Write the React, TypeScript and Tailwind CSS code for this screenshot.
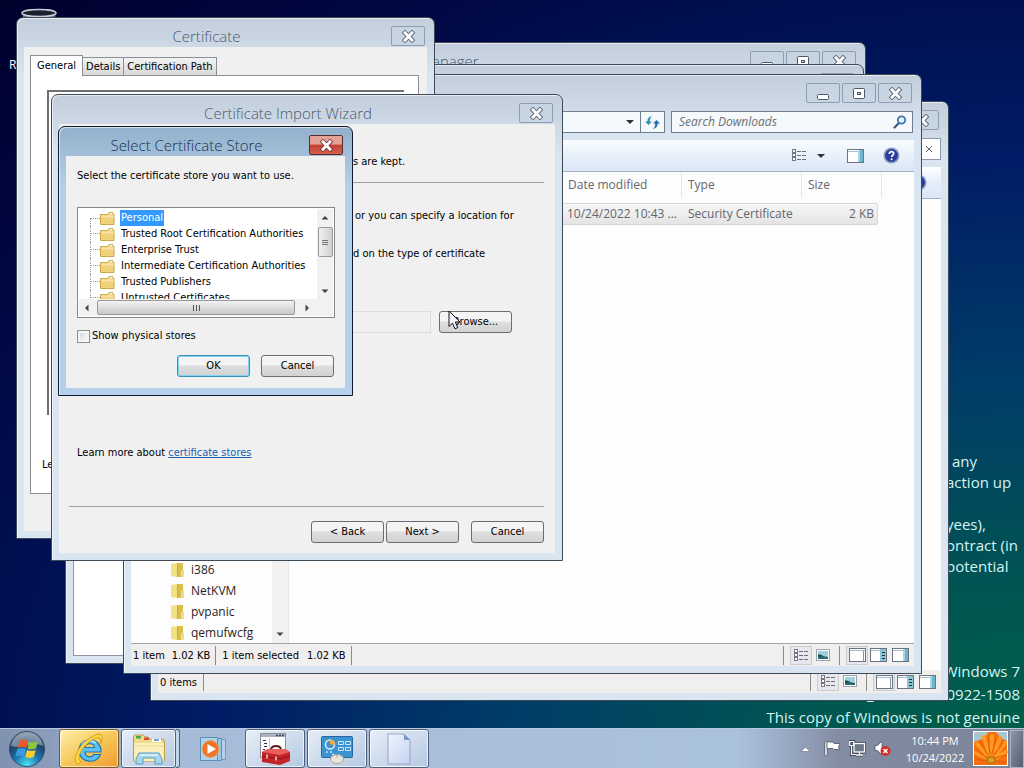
import type { ReactNode } from "react";

const TAHOMA = "font-['DejaVu_Sans_Condensed','DejaVu_Sans',sans-serif]";
const SEGOE = "font-['Open_Sans','Noto_Sans',sans-serif]";

/* ---------- caption glyphs ---------- */

function CloseGlyph({ stroke = "#5a6577" }: { stroke?: string }) {
  return (
    <svg width="15" height="13" viewBox="0 0 15 13" aria-hidden="true">
      <path d="M4 2.800l7 7.400M11 2.800l-7 7.400" stroke={stroke} strokeWidth="4.600" strokeLinecap="square" />
      <path d="M4 2.800l7 7.400M11 2.800l-7 7.400" stroke="#fff" strokeWidth="2.800" strokeLinecap="square" />
    </svg>
  );
}

function MinGlyph() {
  return (
    <svg width="14" height="13" viewBox="0 0 14 13" aria-hidden="true">
      <rect x="1.500" y="7.500" width="11" height="5" rx="1" fill="#fff" stroke="#4c5768" />
    </svg>
  );
}

function MaxGlyph() {
  return (
    <svg width="14" height="13" viewBox="0 0 14 13" aria-hidden="true">
      <rect x="1.500" y="1.500" width="11" height="10" rx="1" fill="#fff" stroke="#4c5768" />
      <rect x="5.500" y="5.500" width="3" height="2" fill="#c5d0dd" stroke="#4c5768" />
    </svg>
  );
}

function CaptionButton({ label, children, red }: { label: string; children: ReactNode; red?: boolean }) {
  return (
    <button
      type="button"
      aria-label={label}
      className={
        red
          ? "flex h-5 w-[34px] items-center justify-center rounded-[2px] border border-[#5b2a30] bg-linear-to-b from-[#e3a197] from-45% via-[#c2402f] via-50% to-[#d4604c]"
          : "flex h-5 w-[34px] items-center justify-center rounded-[2px] border border-[#8f9db3] bg-[#c6d3e1]/60"
      }
    >
      {children}
    </button>
  );
}

type WindowProps = {
  place: string;
  title?: string;
  left?: boolean;
  active?: boolean;
  sizable?: boolean;
  children?: ReactNode;
};

function Window({ place, title, left, active, sizable, children }: WindowProps) {
  const tone = active
    ? "border-[#0e1c2c] from-[#93b0cc] to-[#b4d0ea]"
    : "border-[#3f4a57] from-[#c2cedb] to-[#d9e5f1]";
  return (
    <section
      className={`absolute flex flex-col rounded-t-[7px] border bg-linear-to-b to-[60px] px-[7px] pb-[7px] shadow-[inset_1px_1px_0_rgba(255,255,255,0.6)] ${tone} ${place}`}
    >
      <header className="flex h-[29px] shrink-0 items-center gap-[3px] pr-[2px] pl-px">
        <h2
          className={`min-w-0 flex-1 truncate pt-[7px] text-[15px] leading-5 font-light ${SEGOE} ${
            left ? "text-left" : "text-center"
          } ${active ? "text-[#16304e]" : "text-[#4b596d]"}`}
        >
          {title}
        </h2>
        <div className="flex gap-[2px] pt-[7px]">
          {sizable && (
            <>
              <CaptionButton label="Minimize">
                <MinGlyph />
              </CaptionButton>
              <CaptionButton label="Maximize">
                <MaxGlyph />
              </CaptionButton>
            </>
          )}
          <CaptionButton label="Close" red={active}>
            <CloseGlyph stroke={active ? "#7b3a3a" : undefined} />
          </CaptionButton>
        </div>
      </header>
      {children}
    </section>
  );
}

function PushButton({ children, focused }: { children: ReactNode; focused?: boolean }) {
  return (
    <button
      type="button"
      className={`h-[22px] w-[73px] rounded-[3px] border bg-linear-to-b from-[#f4f4f4] from-45% via-[#dedede] via-50% to-[#d2d2d2] text-[11px] leading-4 ${
        focused ? "border-[#3a91b8] ring-1 ring-[#7fd4f2] ring-inset" : "border-[#6d6d6d]"
      }`}
    >
      {children}
    </button>
  );
}

/* ---------- small icons ---------- */

function SearchIcon() {
  return (
    <svg width="14" height="14" viewBox="0 0 14 14" aria-hidden="true">
      <path d="M1.500 12.500l4-4" stroke="#33567f" strokeWidth="2.200" strokeLinecap="round" />
      <circle cx="8.500" cy="5" r="3.700" fill="#e6f4ff" stroke="#3f76b4" strokeWidth="1.800" />
    </svg>
  );
}

function RefreshIcon() {
  return (
    <svg width="15" height="15" viewBox="0 0 15 15" aria-hidden="true">
      <path d="M0 6.500L3.500 10 7 6.500H4.800C4.800 4 5.500 2.500 7 1 4 1.500 2.300 3.500 2.300 6.500z" fill="#2d95b5" />
      <path d="M8 8.500L11.500 5 15 8.500h-2.300c0 3-1.700 5-4.700 5.500 1.500-1.500 2.200-3 2.200-5.500z" fill="#2c70b0" />
    </svg>
  );
}

function ListIcon() {
  return (
    <svg width="16" height="13" viewBox="0 0 16 13" aria-hidden="true">
      <g fill="#fff" stroke="#76777c">
        <rect x="1.500" y=".5" width="3" height="3" />
        <rect x="1.500" y="4.500" width="3" height="3" />
        <rect x="1.500" y="8.500" width="3" height="3" />
      </g>
      <path d="M6 2.500h4M11 2.500h4M6 6.500h4M11 6.500h4M6 10.500h4M11 10.500h4" stroke="#6b717c" />
    </svg>
  );
}

function PictureIcon() {
  return (
    <svg width="14" height="13" viewBox="0 0 14 13" aria-hidden="true">
      <rect x=".5" y=".5" width="13" height="11" fill="#fff" stroke="#9aa3ad" />
      <path d="M2 2h10v8H2z" fill="#9fd0e0" />
      <path d="M2 6c3-1 5 2 10 2v2H2z" fill="#2a6a6c" />
      <path d="M2 5.500l4 .5-1 1.500H2z" fill="#173f46" />
    </svg>
  );
}

function PaneIcon({ variant = "plain" }: { variant?: "plain" | "lines" | "side" }) {
  return (
    <svg width="17" height="14" viewBox="0 0 17 14" aria-hidden="true">
      <rect x=".5" y=".5" width="16" height="13" fill="#fff" stroke="#6b7480" />
      <path d="M1 2.500h15" stroke="#a9bccb" />
      {variant === "plain" && <path d="M14.500 3v10.500" stroke="#8497a8" />}
      {variant === "side" && (
        <>
          <path d="M11 1h5v12h-5z" fill="#6fb4cd" />
          <path d="M11 1h2v12h-2z" fill="#a6d6e4" />
        </>
      )}
      {variant === "lines" && (
        <>
          <path d="M10 1h6v12h-6z" fill="#8cc3d3" />
          <path d="M12 4.500h3M12 7.500h3M12 10.500h3" stroke="#14343d" />
        </>
      )}
    </svg>
  );
}

function HelpIcon() {
  return (
    <svg width="17" height="17" viewBox="0 0 17 17" aria-hidden="true">
      <circle cx="8.500" cy="8.500" r="8" fill="#8e9cc0" />
      <circle cx="8.500" cy="8.500" r="6.500" fill="#2a3f9b" />
      <path d="M6.300 7C6.300 3.700 11 4 10.700 6.800 10.600 8.300 8.600 8.300 8.600 10" fill="none" stroke="#fff" strokeWidth="1.700" />
      <circle cx="8.600" cy="12.200" r="1" fill="#fff" />
    </svg>
  );
}

function Arrow() {
  return (
    <svg width="8" height="8" viewBox="0 0 8 8" aria-hidden="true">
      <path d="M0 2h8L4 6z" fill="#333" />
    </svg>
  );
}

function ScrollArrow({ dir }: { dir: "up" | "down" | "left" | "right" }) {
  const d = {
    down: "M.5 2.500h7L4 6z",
    up: "M.5 5.500h7L4 2z",
    left: "M5.500 .5v7L2 4z",
    right: "M2.500 .5v7L6 4z",
  }[dir];
  return (
    <svg width="8" height="8" viewBox="0 0 8 8" aria-hidden="true">
      <path d={d} fill="#444" />
    </svg>
  );
}

function TreeFolder() {
  return (
    <svg width="15" height="13" viewBox="0 0 15 13" aria-hidden="true">
      <path d="M.5 12.500v-10h7l1.500-2h4v2h1v10z" fill="#f0d27a" stroke="#cda74f" />
      <path d="M1 4.500h12.500" stroke="#f8e5a4" strokeWidth="2" />
      <path d="M9.500 1.500h3" stroke="#fff" />
    </svg>
  );
}

function NavFolder() {
  return (
    <svg width="14" height="16" viewBox="0 0 14 16" aria-hidden="true">
      <path d="M5 1h7v14H5z" fill="#d9c04a" />
      <path d="M0 2l6-1v14l-6-1z" fill="#f2e083" />
      <path d="M6.500 2v12" stroke="#c8a93a" />
      <path d="M10 8h3v7h-3z" fill="#e9dd9b" />
    </svg>
  );
}

/* ---------- windows ---------- */

function StatusIcons() {
  return (
    <div className="flex h-full items-center">
      <span className="mr-[6px] h-[19px] w-px bg-[#8b8b8b]" />
      <button type="button" aria-label="Details view" className="flex h-[19px] w-[22px] items-center justify-center border border-[#c9cdd3] bg-[#e6e8ec]">
        <ListIcon />
      </button>
      <button type="button" aria-label="Thumbnails" className="ml-1">
        <PictureIcon />
      </button>
      <span className="mr-[6px] ml-[9px] h-[19px] w-px bg-[#8b8b8b]" />
      <button type="button" aria-label="Single pane" className="flex h-[19px] w-[22px] items-center justify-center border border-[#c9cdd3] bg-[#e6e8ec]">
        <PaneIcon />
      </button>
      <button type="button" aria-label="Details pane" className="ml-[2px]">
        <PaneIcon variant="lines" />
      </button>
      <button type="button" aria-label="Preview pane" className="ml-[5px]">
        <PaneIcon variant="side" />
      </button>
    </div>
  );
}

function BackExplorer() {
  return (
    <Window place="top-[101px] left-[150px] h-[600px] w-[799px]" sizable>
      <div className="flex h-9 shrink-0 items-center justify-end">
        <button type="button" aria-label="Clear search" className="flex h-[22px] w-8 items-center justify-center border border-[#8b99aa] bg-white pl-2">
          <svg width="8" height="8" viewBox="0 0 8 8" aria-hidden="true">
            <path d="M1 1l6 6M7 1L1 7" stroke="#667" />
          </svg>
        </button>
      </div>
      <div className="flex h-8 shrink-0 items-center justify-end border-b border-[#a0afc3] bg-linear-to-b from-white via-[#e5eefa] to-[#dce6f4] pr-[14px]">
        <HelpIcon />
      </div>
      <div className="flex-1 bg-[#fdfdfd]" />
      <footer className="flex h-[23px] shrink-0 items-center bg-[#f1eeee] text-[11px]">
        <span className="flex h-[19px] items-center border-r border-[#8b8b8b] pt-[3px] pr-[6px] pl-[2px]">0 items</span>
        <span className="flex-1" />
        <StatusIcons />
        <span className="w-[5px]" />
      </footer>
    </Window>
  );
}

function Downloads() {
  return (
    <Window place="top-[74px] left-[123px] h-[600px] w-[799px]" sizable>
      <div className="flex h-9 shrink-0 items-start pt-[7px] pr-px">
        <div className="flex h-[22px] flex-1 border border-[#6f7f92] bg-[#f5f9fc]">
          <button type="button" aria-label="Recent locations" className="flex flex-1 items-center justify-end pr-[6px]">
            <Arrow />
          </button>
          <button type="button" aria-label="Refresh" className="flex w-6 items-center justify-center border-l border-[#6f7f92]">
            <RefreshIcon />
          </button>
        </div>
        <label className="ml-[6px] flex h-[22px] w-[242px] items-center border border-[#6f7f92] bg-[#f5f9fc] pr-[5px] pl-[7px]">
          <input
            aria-label="Search Downloads"
            placeholder="Search Downloads"
            className={`min-w-0 flex-1 text-[12px] leading-4 italic outline-none placeholder:text-[#6c6f73] ${SEGOE}`}
          />
          <SearchIcon />
        </label>
      </div>
      <div className="flex h-8 shrink-0 items-center justify-end border-b border-[#a0afc3] bg-linear-to-b from-[#fafdff] via-[#e9f2fb] via-45% to-[#dce6f4] pr-[14px]">
        <button type="button" aria-label="Change view" className="flex items-center gap-[10px]">
          <ListIcon />
          <Arrow />
        </button>
        <button type="button" aria-label="Preview pane" className="ml-[22px]">
          <PaneIcon variant="side" />
        </button>
        <button type="button" aria-label="Help" className="ml-[19px]">
          <HelpIcon />
        </button>
      </div>
      <div className="flex min-h-0 flex-1 bg-[#fdfdfd]">
        <nav className="flex w-[158px] shrink-0 items-end border-r border-[#e3e6ea]">
          <ul className={`flex flex-1 flex-col text-[12px] leading-[21px] text-[#2b1d26] ${SEGOE}`}>
            {["i386", "NetKVM", "pvpanic", "qemufwcfg"].map((name) => (
              <li key={name} className="flex items-center gap-[6px] pl-10">
                <NavFolder />
                {name}
              </li>
            ))}
          </ul>
          <div className="flex h-full w-4 items-end justify-center bg-[#f1f1f1] pb-[5px]">
            <ScrollArrow dir="down" />
          </div>
        </nav>
        <div className={`min-w-0 flex-1 pr-8 pl-[273px] text-[12px] text-[#63666b] ${SEGOE}`}>
          <table className="w-full table-fixed border-separate border-spacing-0">
            <colgroup>
              <col className="w-[120px]" />
              <col className="w-[120px]" />
              <col className="w-[76px]" />
              <col />
            </colgroup>
            <thead>
              <tr className="h-[26px] text-left leading-4">
                <th className="border-r border-[#e3e6ea] pl-[6px] font-normal">Date modified</th>
                <th className="border-r border-[#e3e6ea] pl-[6px] font-normal">Type</th>
                <th className="border-r border-[#e3e6ea] pl-[6px] font-normal" colSpan={2}>
                  Size
                </th>
              </tr>
            </thead>
            <tbody>
              <tr>
                <td className="h-[5px]" colSpan={4} />
              </tr>
              <tr className="h-[22px] leading-4">
                <td className="truncate border-y border-[#d6d6d6] bg-linear-to-b from-[#f7f7f7] to-[#e4e4e4] pl-[5px]">10/24/2022 10:43 ...</td>
                <td className="border-y border-[#d6d6d6] bg-linear-to-b from-[#f7f7f7] to-[#e4e4e4] pl-[6px]">Security Certificate</td>
                <td className="rounded-r-[2px] border-y border-r border-[#d6d6d6] bg-linear-to-b from-[#f7f7f7] to-[#e4e4e4] pr-[3px] text-right">2 KB</td>
              </tr>
            </tbody>
          </table>
        </div>
      </div>
      <footer className="flex h-[23px] shrink-0 items-center border-t border-[#a5a5a5] bg-[#f1eeee] text-[11px]">
        <span className="flex h-[19px] items-center gap-[7px] border-r border-[#8b8b8b] pt-[2px] pr-[5px] pl-[2px]">
          <span>1 item</span>
          <span>1.02 KB</span>
        </span>
        <span className="flex h-[19px] items-center gap-2 border-r border-[#8b8b8b] px-[6px] pt-[2px]">
          <span>1 item selected</span>
          <span>1.02 KB</span>
        </span>
        <span className="flex-1" />
        <StatusIcons />
        <span className="w-[5px]" />
      </footer>
    </Window>
  );
}

function CertificateWindow() {
  return (
    <Window place="top-[17px] left-4 h-[522px] w-[419px]" title="Certificate">
      <div className="flex flex-1 flex-col bg-[#f0f0f0] pt-2 pr-2 pb-[37px] pl-[6px] text-[11px] leading-4">
        <div role="tablist" className="z-10 flex items-end">
          <button type="button" role="tab" aria-selected="true" className="-mb-px h-[21px] border border-b-0 border-[#8a8e96] bg-white px-[6px]">
            General
          </button>
          <button type="button" role="tab" aria-selected="false" className="h-[18px] border border-b-0 border-l-0 border-[#8a8e96] bg-linear-to-b from-[#f3f3f3] to-[#d9d9d9] px-[3px]">
            Details
          </button>
          <button type="button" role="tab" aria-selected="false" className="h-[18px] border border-b-0 border-l-0 border-[#8a8e96] bg-linear-to-b from-[#f3f3f3] to-[#d9d9d9] px-[3px]">
            Certification Path
          </button>
        </div>
        <div role="tabpanel" className="flex flex-1 flex-col border border-[#8a8e96] bg-white pt-[14px] pr-[14px] pb-5 pl-[11px]">
          <div className="ml-[5px] flex-1 border-t-2 border-l-2 border-[#6f6f6f]" />
          <p className="mt-[42px]">Le</p>
        </div>
      </div>
    </Window>
  );
}

function Pointer() {
  return (
    <svg className="absolute -top-px left-[9px]" width="13" height="20" viewBox="0 0 13 20" aria-hidden="true">
      <path d="M1 1v15.500l3.500-3.300 2.500 5.600 2.700-1.200L7.300 12H12z" fill="#f4f4f4" stroke="#111" />
    </svg>
  );
}

function ImportWizard() {
  return (
    <Window place="top-[94px] left-[51px] h-[467px] w-[512px]" title="Certificate Import Wizard">
      <div className="flex flex-1 flex-col bg-[#f0f0f0] pt-[30px] pr-[11px] pb-[10px] pl-[10px] text-[11px] leading-4">
        <p className="pl-[284px]">s are kept.</p>
        <hr className="mt-3 border-[#a0a0a0]" />
        <p className="mt-[25px] pl-[286px]">or you can specify a location for</p>
        <p className="mt-[22px] pl-[284px]">d on the type of certificate</p>
        <div className="mt-[49px] flex items-center gap-2 pr-8 pl-2">
          <input aria-label="Certificate store" readOnly className="h-[22px] min-w-0 flex-1 border border-[#dcdcdc] bg-[#f0f0f0]" />
          <div className="relative flex">
            <PushButton>Browse...</PushButton>
            <Pointer />
          </div>
        </div>
        <p className="mt-28 pl-2">
          Learn more about{" "}
          <a href="#stores" className="text-[#1a62b0] underline">
            certificate stores
          </a>
        </p>
        <hr className="mt-auto border-[#a0a0a0]" />
        <div className="mt-[14px] flex justify-end">
          <PushButton>&lt; Back</PushButton>
          <span className="w-[2px]" />
          <PushButton>Next &gt;</PushButton>
          <span className="w-3" />
          <PushButton>Cancel</PushButton>
        </div>
      </div>
    </Window>
  );
}

const STORES = [
  "Personal",
  "Trusted Root Certification Authorities",
  "Enterprise Trust",
  "Intermediate Certification Authorities",
  "Trusted Publishers",
  "Untrusted Certificates",
];

function SelectStore() {
  return (
    <Window place="top-[126px] left-[58px] h-[270px] w-[295px]" title="Select Certificate Store" active>
      <div className="flex flex-1 flex-col bg-[#f0f0f0] pt-3 pr-[10px] pl-[11px] text-[11px] leading-4">
        <p>Select the certificate store you want to use.</p>
        <div className="mt-[23px] flex h-[111px] flex-col border border-[#828790] bg-white p-px">
          <div className="flex min-h-0 flex-1">
            <ul role="tree" className="min-w-0 flex-1 overflow-hidden pt-px">
              {STORES.map((name, i) => (
                <li key={name} role="treeitem" aria-selected={i === 0} className="flex h-4 items-center pl-[11px]">
                  <span className={`flex w-[10px] flex-col border-l border-dotted border-[#9a9a9a] ${i === 0 ? "mt-2 h-2" : "h-4"}`}>
                    <span className={`border-b border-dotted border-[#9a9a9a] ${i === 0 ? "h-px" : "h-2"}`} />
                  </span>
                  <TreeFolder />
                  <span className={`ml-[5px] px-px leading-4 ${i === 0 ? "bg-[#3399ff] text-white" : ""}`}>{name}</span>
                </li>
              ))}
            </ul>
            <div className="flex w-4 flex-col items-center bg-[#f1f1f1] pt-[5px] pb-1">
              <ScrollArrow dir="up" />
              <div className="mt-[5px] flex h-[30px] w-[15px] shrink-0 flex-col items-center justify-center gap-px rounded-[2px] border border-[#999] bg-linear-to-r from-[#f2f2f2] to-[#cfcfcf]">
                <span className="h-px w-[6px] bg-[#777]" />
                <span className="h-px w-[6px] bg-[#777]" />
                <span className="h-px w-[6px] bg-[#777]" />
              </div>
              <span className="flex-1" />
              <ScrollArrow dir="down" />
            </div>
          </div>
          <div className="flex h-[17px] shrink-0 items-center bg-[#f1f1f1] pr-[22px] pl-[4px]">
            <ScrollArrow dir="left" />
            <div className="mr-2 ml-[6px] flex h-[15px] flex-1 items-center justify-center gap-[2px] rounded-[2px] border border-[#999] bg-linear-to-b from-[#f2f2f2] to-[#c9c9c9]">
              <span className="h-[6px] w-px bg-[#555]" />
              <span className="h-[6px] w-px bg-[#555]" />
              <span className="h-[6px] w-px bg-[#555]" />
            </div>
            <ScrollArrow dir="right" />
          </div>
        </div>
        <label className="mt-[10px] flex items-center gap-[2px]">
          <input type="checkbox" className="h-[13px] w-[13px] appearance-none border border-[#8e8f8f] bg-linear-to-br from-[#cfd3d6] to-white shadow-[inset_0_0_0_2px_#f4f4f4]" />
          Show physical stores
        </label>
        <div className="mt-[11px] flex justify-end gap-[11px] pr-px">
          <PushButton focused>OK</PushButton>
          <PushButton>Cancel</PushButton>
        </div>
      </div>
    </Window>
  );
}

/* ---------- taskbar ---------- */

function StartOrb() {
  return (
    <svg width="38" height="38" viewBox="0 0 38 38" aria-hidden="true">
      <defs>
        <radialGradient id="orb" cx="50%" cy="95%" r="90%">
          <stop offset="0" stopColor="#4fe3f5" />
          <stop offset=".4" stopColor="#1b78b0" />
          <stop offset=".75" stopColor="#1d4166" />
          <stop offset="1" stopColor="#5f7186" />
        </radialGradient>
      </defs>
      <circle cx="19" cy="19" r="17.500" fill="url(#orb)" stroke="#34506f" />
      <path d="M3 16C5 6 13 2 19 2s14 4 16 14c-9-5-22 3-32 0z" fill="#c4d2df" opacity=".5" />
      <path d="M11.500 10.500c3-1.500 5.500-1 8.500.5L18.300 18c-2.900-1.400-5.300-1.500-8.600-.2z" fill="#ea5a2c" />
      <path d="M21.200 11.500c2.700 1.200 5.300 1.200 8.800-.4l-1.900 7.200c-3.200 1.300-5.700 1.200-8.600.1z" fill="#8cc63f" />
      <path d="M9.300 19.200c3.300-1.300 5.700-1.100 8.600.2L16 26.600c-2.900-1.300-5.300-1.400-8.600-.1z" fill="#3c9be0" />
      <path d="M19.100 19.900c2.900 1.200 5.500 1.200 8.600 0l-1.900 7c-3.200 1.300-5.700 1.300-8.600.2z" fill="#fccb30" />
    </svg>
  );
}

function IeIcon() {
  return (
    <svg width="34" height="34" viewBox="0 0 34 34" aria-hidden="true">
      <path
        d="M29 20H13c0 5.500 7 6.500 8.800 2.500h6.700C25.500 32.500 7 31.500 7 18.500 7 4 29.500 4 29 20zM13 15.500h9.500c-.3-5-9-5-9.500 0z"
        fill="#5cc3f0"
        stroke="#1878ba"
        strokeWidth="1.200"
      />
      <path d="M10 13c2-4 9-6 14-2" fill="none" stroke="#c5ecfc" strokeWidth="1.500" />
      <path d="M5 31.500C-2 26 12 6 25 2.500c6-1.500 6.500 3 3.500 9 .5-5-.5-6.500-4-5.500C15 8.500 2 25 9 30c-1.500 1.300-3 2.300-4 1.500z" fill="#fbd83f" stroke="#c9921a" strokeWidth=".8" />
    </svg>
  );
}

function LibraryIcon() {
  return (
    <svg width="34" height="32" viewBox="0 0 34 32" aria-hidden="true">
      <path d="M1.500 28V4l1-2h9l1.500 2h3l1 2h14l1.500 3v19z" fill="#f1da8e" stroke="#bd9c48" />
      <path d="M4 3h5v2.500H4z" fill="#46a83f" />
      <path d="M12 4.500h5V7h-5z" fill="#d84b3d" />
      <path d="M20 5.500h9V9h-9z" fill="#fff" />
      <path d="M22 7h5" stroke="#3a87c7" strokeWidth="1.500" />
      <path d="M2 10h30v18H2z" fill="#faefb9" />
      <path d="M2 13h30" stroke="#ecd68a" />
      <path d="M4 31v-5l3-6h20l3 6v5h-7v-6H11v6z" fill="#a5d8ee" stroke="#5b9dc2" />
      <path d="M8 22h18" stroke="#e3f5fc" strokeWidth="1.500" />
    </svg>
  );
}

function MediaIcon() {
  return (
    <svg width="28" height="28" viewBox="0 0 28 28" aria-hidden="true">
      <path d="M10.500 4.500h16v20h-16z" fill="#b3d3ea" stroke="#6f9dc2" />
      <path d="M6.500 3.500h16v22h-16z" fill="#9cc6e4" stroke="#5b8fb9" />
      <path d="M1.500 2.500h17v23h-17z" fill="#b0d4ec" stroke="#5d8fb7" />
      <circle cx="11.500" cy="14" r="8.500" fill="#ee7526" stroke="#e3a673" />
      <path d="M8.500 9v10l8.500-5z" fill="#fff" />
    </svg>
  );
}

function ToolboxIcon() {
  return (
    <svg width="34" height="34" viewBox="0 0 34 34" aria-hidden="true">
      <rect x="2.500" y="1.500" width="25" height="24" fill="#fdfdfd" stroke="#8a8f99" />
      <path d="M3 2h24v3H3z" fill="#aab3c4" />
      <path d="M18 3.500h2M21 3.500h2M24 3.500h2" stroke="#39424f" strokeWidth="1.500" />
      <path d="M5 8.500h3M6 11.500h3M6 14.500h3M5 17.500h2" stroke="#333" />
      <path d="M11.500 6v12" stroke="#c6cbd4" />
      <path d="M13 18c0-5.500 10-5.500 10 0" fill="none" stroke="#5a1518" strokeWidth="2" />
      <path d="M4 20l6-3 17 0 5 3v9l-10 4L4 30z" fill="#c4242a" />
      <path d="M4 20l6-3h17l5 3-10 3z" fill="#ea5f5b" />
      <path d="M4 24l18 3 10-3" fill="none" stroke="#8c1118" />
      <path d="M9 22.500v4M18 24.500v4" stroke="#f0d9b8" strokeWidth="1.500" />
    </svg>
  );
}

function PanelIcon() {
  return (
    <svg width="34" height="30" viewBox="0 0 34 30" aria-hidden="true">
      <rect x="1.500" y="2.500" width="31" height="21" rx="1" fill="#3b94cf" stroke="#22679f" />
      <circle cx="10" cy="10.500" r="4.500" fill="none" stroke="#d9f0ff" strokeWidth="1.500" />
      <path d="M10 10.500V5.500a5 5 0 0 1 5 5z" fill="#f5a83c" />
      <path d="M18.500 7.500h5v3h-5zM25.500 7.500h5v3h-5zM18.500 13.500h5v3h-5zM25.500 13.500h5v3h-5z" fill="none" stroke="#c8e7fa" />
      <path d="M6 18h2M10 18h2M12 20.500h2" stroke="#c8e7fa" strokeWidth="1.500" />
      <ellipse cx="17" cy="25" rx="6.500" ry="4.500" fill="#e9e5da" stroke="#a8a498" />
      <path d="M17 20.500v3" stroke="#a8a498" />
    </svg>
  );
}

function PageIcon() {
  return (
    <svg width="24" height="32" viewBox="0 0 24 32" aria-hidden="true">
      <defs>
        <linearGradient id="page" x1="0" y1="0" x2="1" y2="1">
          <stop offset="0" stopColor="#f1f5fd" />
          <stop offset="1" stopColor="#c3d2f0" />
        </linearGradient>
      </defs>
      <path d="M1 1h16l6 6v24H1z" fill="url(#page)" stroke="#94a6c8" />
      <path d="M17 1v6h6z" fill="#7b97c8" />
    </svg>
  );
}

function TaskButton({ label, tone, children }: { label: string; tone: string; children: ReactNode }) {
  return (
    <button type="button" aria-label={label} className={`flex h-[39px] items-center justify-center rounded-[3px] border ${tone}`}>
      {children}
    </button>
  );
}

const OPEN_TASK = "border-[#4d5f7c] bg-linear-to-br from-[#e6eef8] to-[#b6c9e1] shadow-[inset_0_0_0_1px_rgba(255,255,255,0.7)]";

function Tray() {
  return (
    <div className="flex items-center">
      <button type="button" aria-label="Show hidden icons" className="mr-[3px]">
        <svg width="10" height="6" viewBox="0 0 10 6" aria-hidden="true">
          <path d="M0 5.500h9L4.500 1z" fill="#fff" stroke="#556" strokeWidth=".5" />
        </svg>
      </button>
      <svg className="ml-[10px]" width="17" height="17" viewBox="0 0 17 17" aria-hidden="true">
        <path d="M2 1v15" stroke="#4b5568" strokeWidth="3" />
        <path d="M2 1.500v14" stroke="#fff" strokeWidth="1.500" />
        <path d="M3 2h6l1 1.500h6L14.500 7l1 2.500H10L9 8.500H3z" fill="#fff" stroke="#4b5568" strokeWidth=".8" />
      </svg>
      <svg className="ml-2" width="17" height="17" viewBox="0 0 17 17" aria-hidden="true">
        <path d="M5 3.500h10.500V12H5zM7 15h7M10.500 12v3M.7 1.500h4v4h-4zM2.500 6v8.500H7" fill="none" stroke="#3d4656" strokeWidth="3" />
        <rect x="5" y="3.500" width="10.500" height="8.500" fill="#6c7689" stroke="#fff" strokeWidth="1.300" />
        <path d="M7 15h7M10.500 12v3" stroke="#fff" strokeWidth="1.300" />
        <path d="M.7 1.500h4v4h-4zM2.500 6v8.500H7" fill="none" stroke="#fff" strokeWidth="1.200" />
      </svg>
      <svg className="ml-2" width="17" height="17" viewBox="0 0 17 17" aria-hidden="true">
        <path d="M1 5.500h2.500L8 1v14l-4.500-4.500H1z" fill="#fff" stroke="#4b5568" strokeWidth=".8" />
        <circle cx="11.500" cy="11" r="5" fill="#d92b2b" />
        <path d="M9.500 9l4 4M13.500 9l-4 4" stroke="#fff" strokeWidth="1.500" />
      </svg>
      <time className={`ml-2 flex flex-col items-center text-[11px] leading-[17px] text-white ${SEGOE} w-[72px]`}>
        <span>10:44 PM</span>
        <span>10/24/2022</span>
      </time>
      <svg className="ml-[2px]" width="35" height="35" viewBox="0 0 35 35" aria-hidden="true">
        <rect x=".5" y=".5" width="34" height="34" fill="#f5700f" stroke="#fff" />
        <path d="M1 1h14l-3 6-11 4zM23 1h11v9l-6-3z" fill="#a9c6cf" />
        <g stroke="#ff9a1c" strokeWidth="4" strokeLinecap="round">
          <path d="M17 27L4 13M17 27L11 6M18 27l1-22M19 27l8-20M20 27l12-15M21 28l12-7M16 28L3 22" />
        </g>
        <g stroke="#e9580e" strokeWidth="1.200" strokeLinecap="round">
          <path d="M15 24L7 11M17 23L15 7M19 23l4-15M21 24l9-12M22 27l11-3M14 27L3 19M13 30L3 28M23 30l9 1" />
        </g>
        <ellipse cx="18" cy="29" rx="5" ry="4.500" fill="#c47512" />
        <ellipse cx="18" cy="29" rx="3" ry="2.500" fill="#d9a32a" />
      </svg>
      <button type="button" aria-label="Show desktop" className="ml-[2px] h-[38px] w-[14px] border border-[#aab3c4] bg-linear-to-br from-[#8e97a8] to-[#555d70]" />
    </div>
  );
}

function Taskbar() {
  return (
    <footer className="absolute inset-x-0 bottom-0 flex h-10 items-center justify-between border-t border-[#b9c8de] bg-[linear-gradient(to_right,#8192b0_0%,#8b9dbb_5%,#a6bbd8_14%,#abc2df_72%,#828ca2_82%,#7a8397_100%)]">
      <div className="flex items-center">
        <button type="button" aria-label="Start" className="ml-2">
          <StartOrb />
        </button>
        <div className="ml-[13px] flex items-center gap-[2px]">
          <TaskButton label="Internet Explorer" tone="w-[60px] border-[#7a5a1e] bg-linear-to-br from-[#fff0a8] via-[#f6c85a] to-[#ef9a30] shadow-[inset_0_0_0_1px_rgba(255,255,255,0.6)]">
            <IeIcon />
          </TaskButton>
          <span className="flex">
            <TaskButton label="File Explorer" tone={`w-[55px] ${OPEN_TASK}`}>
              <LibraryIcon />
            </TaskButton>
            <span className="h-[39px] w-1 rounded-r-[3px] border-y border-r border-[#4d5f7c] bg-[#c5d5ea]" />
          </span>
          <TaskButton label="Media Player" tone="w-[61px] border-transparent">
            <MediaIcon />
          </TaskButton>
          <TaskButton label="Toolbox" tone={`w-[60px] ${OPEN_TASK}`}>
            <ToolboxIcon />
          </TaskButton>
          <TaskButton label="Control Panel" tone={`w-[60px] ${OPEN_TASK}`}>
            <PanelIcon />
          </TaskButton>
          <TaskButton label="Document" tone={`w-[60px] ${OPEN_TASK}`}>
            <PageIcon />
          </TaskButton>
        </div>
      </div>
      <Tray />
    </footer>
  );
}

export default function App() {
  return (
    <main
      className={`relative min-h-screen overflow-hidden bg-[#00002c] bg-[radial-gradient(ellipse_at_100%_100%,#006048_0%,#00584f_14%,#003c68_36%,#001c66_56%,#000a48_78%,#00002c_100%)] text-black ${TAHOMA}`}
    >
      <div className="absolute top-2 left-[9px] flex flex-col text-[12px] text-white">
        <svg className="ml-3" width="36" height="20" viewBox="0 0 36 20" aria-hidden="true">
          <path d="M1 5l3 14h28l3-14z" fill="#59657a" />
          <ellipse cx="18" cy="5" rx="17" ry="3.500" fill="#1b2030" stroke="#c8ccd4" strokeWidth="1.500" />
        </svg>
        <span className={`mt-[29px] leading-4 ${SEGOE}`}>R</span>
      </div>

      <div className={`absolute right-0 bottom-[191px] flex w-[78px] flex-col text-[15px] leading-[21px] whitespace-nowrap text-[#d5f4f4] ${SEGOE}`}>
        <span className="pl-[6px]">any</span>
        <span>action up</span>
        <span className="h-[21px]" />
        <span>yees),</span>
        <span>ontract (in</span>
        <span>potential</span>
      </div>
      <div className={`absolute right-1 bottom-[39px] flex flex-col items-end text-[15px] leading-[23px] whitespace-nowrap text-[#d5f4f4] ${SEGOE}`}>
        <span>Windows 7</span>
        <span className="flex gap-[73px]">
          <span>_</span>
          <span>0922-1508</span>
        </span>
        <span>This copy of Windows is not genuine</span>
      </div>

      <BackExplorer />
      <Window place="top-[42px] left-[423px] h-[500px] w-[443px]" title="anager" left sizable />
      <Window place="top-[64px] left-[65px] h-[600px] w-[799px]">
        <div className="flex-1 border border-[#8b95a3] bg-white" />
      </Window>
      <Downloads />
      <CertificateWindow />
      <ImportWizard />
      <SelectStore />
      <Taskbar />
    </main>
  );
}
